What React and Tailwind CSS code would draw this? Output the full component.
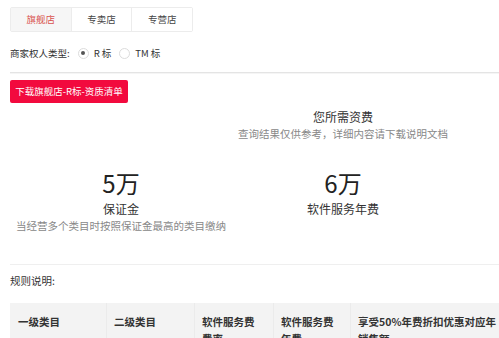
import React from 'react'

const font = "font-['Noto_Sans_CJK_SC','Noto_Sans',sans-serif]"

const tabs = [
  { label: '旗舰店', active: true },
  { label: '专卖店', active: false },
  { label: '专营店', active: false },
]

const fees = [
  { amount: '5万', name: '保证金', desc: '当经营多个类目时按照保证金最高的类目缴纳' },
  { amount: '6万', name: '软件服务年费', desc: '' },
  { amount: '', name: '', desc: '满足年销售额享受年费折扣' },
]

const columns = [
  { title: '一级类目', w: 'w-[96px]' },
  { title: '二级类目', w: 'w-[88px]' },
  { title: '软件服务费费率', w: 'w-[79px]' },
  { title: '软件服务费年费', w: 'w-[77px]' },
  { title: '享受50%年费折扣优惠对应年销售额', w: 'w-[158px]' },
]

function Radio({ checked, label }) {
  return (
    <label className="flex items-center gap-[5px]">
      <span className="w-[11px] h-[11px] rounded-full border border-[#dcdcdc] flex items-center justify-center">
        {checked && <span className="w-[4px] h-[4px] rounded-full bg-[#555]" />}
      </span>
      <span>{label}</span>
    </label>
  )
}

export default function App() {
  return (
    <div className={`w-[499px] h-[338px] overflow-hidden bg-white text-[#333] ${font}`}>
      <div className="w-[760px] pl-[10px] pt-[7px]">
        <div className="flex w-[183px] h-[25px] border border-[#ececec] rounded-[2px] text-[9.5px]">
          {tabs.map((t, i) => (
            <div
              key={t.label}
              className={`flex-1 flex items-center justify-center ${i > 0 ? 'border-l border-[#ececec]' : ''} ${
                t.active ? 'bg-[#f6f6f6] text-[#d9534f]' : 'bg-white text-[#444]'
              }`}
            >
              {t.label}
            </div>
          ))}
        </div>

        <div className="mt-[14px] h-[14px] flex items-center text-[9.5px] leading-[14px]">
          <span className="mr-[8px]">商家权人类型:</span>
          <Radio checked label="R 标" />
          <span className="w-[8px]" />
          <Radio label="TM 标" />
        </div>

        <div className="mt-[12px] h-px bg-[#e4e4e4]" />
        <div className="h-px bg-[#f5f5f5]" />

        <button className="mt-[6px] h-[23px] w-[118px] rounded-[2px] bg-[#f20a3e] text-white text-[9.5px] flex items-center justify-center">
          下载旗舰店-R标-资质清单
        </button>

        <div className="w-[666px]">
          <div className="mt-[6px] text-center text-[12px] leading-[16px] text-[#333]">您所需资费</div>
          <div className="mt-[2px] text-center text-[10.5px] leading-[14px] text-[#888]">
            查询结果仅供参考，详细内容请下载说明文档
          </div>

          <div className="mt-[28px] grid grid-cols-3">
            {fees.map((f, i) => (
              <div key={i} className="flex flex-col items-center">
                <div className="h-[28px] text-[24px] leading-[28px] text-[#222]">{f.amount}</div>
                <div className="mt-[4px] h-[16px] text-[12px] leading-[16px] text-[#333]">{f.name}</div>
                <div className="mt-[2px] h-[14px] text-[10.5px] leading-[14px] text-[#888] whitespace-nowrap">
                  {f.desc}
                </div>
              </div>
            ))}
          </div>
        </div>

        <div className="mt-[31px] h-px bg-[#efefef]" />

        <div className="mt-[9px] text-[10.5px] leading-[14px] text-[#333]">规则说明:</div>

        <div className="mt-[15px] flex bg-[#f3f3f3] text-[10.5px] leading-[17px] font-bold text-[#333]">
          {columns.map((c, i) => (
            <div
              key={c.title}
              className={`${c.w} shrink-0 pr-[10px] pt-[10px] pb-[10px] ${i > 0 ? 'pl-[7px] border-l border-[#ebebeb]' : 'pl-[8px]'}`}
            >
              {c.title}
            </div>
          ))}
        </div>
      </div>
    </div>
  )
}
